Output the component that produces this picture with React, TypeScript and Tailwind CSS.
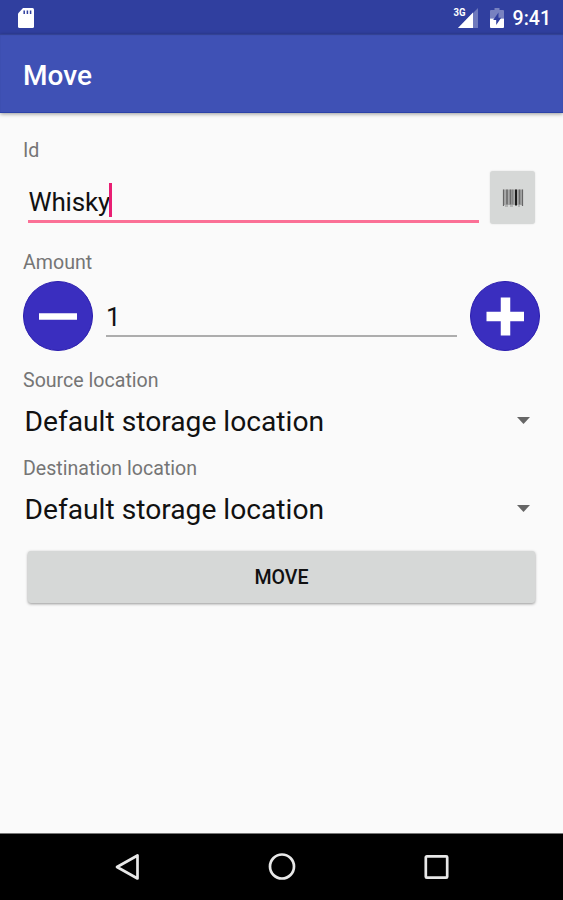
import { useState } from 'react';

function SdCardIcon() {
  return (
    <svg className="w-[18px] h-[22px]" viewBox="0 0 18 22" fill="none">
      <path d="M6 1h9.500a1.500 1.500 0 0 1 1.500 1.500v17a1.500 1.500 0 0 1-1.500 1.500h-13A1.500 1.500 0 0 1 1 19.500V6.500z" fill="#fff" />
      <path d="M7.200 3.500v3.500M10.400 3.500v3.500M13.600 3.500v3.500" stroke="#303f9f" strokeWidth="1.500" />
    </svg>
  );
}

function SignalIcon() {
  return (
    <svg className="w-[26px] h-[24px]" viewBox="0 0 26 24">
      <path d="M25 2v20H5z" fill="#fff" fillOpacity="0.3" />
      <path d="M20 6.500V22H5z" fill="#fff" />
      <text
        x="0.500"
        y="9.500"
        fill="#fff"
        stroke="#303f9f"
        strokeWidth="1"
        paintOrder="stroke"
        fontSize="11"
        fontWeight="700"
        textLength="12"
        lengthAdjust="spacingAndGlyphs"
      >
        3G
      </text>
    </svg>
  );
}

function BatteryIcon() {
  return (
    <svg className="w-[14px] h-[22px]" viewBox="0 0 14 22">
      <path d="M4.500 1h5v2H13a1 1 0 0 1 1 1v7.500H0V4a1 1 0 0 1 1-1h3.500z" fill="#fff" fillOpacity="0.35" />
      <path d="M0 11.500h14V20a1 1 0 0 1-1 1H1a1 1 0 0 1-1-1z" fill="#fff" />
      <path d="M8.500 5.500L3.200 13h3v5l5-7.300H8.500z" fill="#303f9f" />
    </svg>
  );
}

function BarcodeIcon() {
  return (
    <svg className="w-[22px] h-[18px]" viewBox="0 0 22 18">
      <rect x="1" y="0.500" width="20" height="15.500" fill="#a9aaaa" />
      <path d="M1.500 0.500V17M20.500 0.500V17" stroke="#666" strokeWidth="1.200" />
      <path d="M5 0.500V15.500M8.500 0.500V15.500M17.500 0.500V15.500" stroke="#6a6a6a" strokeWidth="1.600" />
      <path d="M10.800 0.500V15.500" stroke="#777" strokeWidth="1" />
      <path d="M14 0.500V16.500" stroke="#1c1c1c" strokeWidth="2" />
      <path d="M3 17h3M8 17h3M16 17h2" stroke="#8f9090" strokeWidth="1" />
    </svg>
  );
}

function Label({ children }: { children: string }) {
  return <div className="h-6 pt-px leading-6 text-[19.600px] text-[#757575]">{children}</div>;
}

function Spinner({ value }: { value: string }) {
  return (
    <button className="flex w-full items-center justify-between pl-[1.500px] pr-[10px] h-[58px] text-[28.200px] text-[#111]">
      <span className="pt-[2px]">{value}</span>
      <svg className="w-[13px] h-[7px] -mt-[2px]" viewBox="0 0 13 7">
        <path d="M0 0h13L6.500 7z" fill="#666" />
      </svg>
    </button>
  );
}

export default function App() {
  const [amount, setAmount] = useState(1);

  return (
    <div className="flex flex-col w-[563px] h-[900px] overflow-hidden bg-[#fafafa] font-[Roboto,sans-serif]">
      <div className="flex items-center justify-between h-[34px] pt-[2px] pl-[17px] pr-3 bg-[#303f9f]">
        <SdCardIcon />
        <div className="flex items-center">
          <SignalIcon />
          <div className="ml-[11px] flex">
            <BatteryIcon />
          </div>
          <span className="ml-[9px] pt-[2px] text-[19.500px] leading-6 font-medium text-white">9:41</span>
        </div>
      </div>

      <header className="flex items-center h-[79px] px-[23px] pt-[6px] bg-[#3f51b5] border-b border-[#2c42a8] shadow-[inset_0_1px_1px_rgba(0,0,0,0.2),0_1px_4px_rgba(0,0,0,0.4)]">
        <h1 className="text-[28px] font-medium text-white">Move</h1>
      </header>

      <main className="flex-grow px-[23px] pt-[25px]">
        <Label>Id</Label>
        <div className="flex mt-[9px] h-[53px]">
          <div className="flex items-center ml-[5px] mr-[11px] w-[451px] h-[52px] pt-[13px] border-b-[3px] border-[#fb7096]">
            <span className="pl-[0.500px] text-[26px] tracking-[-0.15px] text-[#111]">Whisky</span>
            <span className="w-[2.500px] h-[34px] -mt-[5px] -ml-px bg-[#e91e73]" />
          </div>
          <button className="flex items-center justify-center w-[45px] h-[53px] rounded-[3px] bg-[#d6d8d7] shadow-[0_0_2px_rgba(0,0,0,0.12)]">
            <BarcodeIcon />
          </button>
        </div>

        <div className="mt-[26px]">
          <Label>Amount</Label>
        </div>
        <div className="flex items-center mt-[7px] h-[70px]">
          <button onClick={() => setAmount(amount - 1)}>
            <svg className="w-[70px] h-[70px]" viewBox="0 0 70 70">
              <circle cx="35" cy="35" r="34.500" fill="#3a2ebf" stroke="#2a1cae" />
              <path d="M16 35.500h38" stroke="#fff" strokeWidth="6.500" />
            </svg>
          </button>
          <div className="flex items-center ml-[13px] mr-[13px] w-[351px] h-[42px] mt-[-1px] pt-[6px] border-b-2 border-[#adadad] text-[26px] text-[#111]">
            {amount}
          </div>
          <button onClick={() => setAmount(amount + 1)}>
            <svg className="w-[70px] h-[70px]" viewBox="0 0 70 70">
              <circle cx="35" cy="35" r="34.500" fill="#3a2ebf" stroke="#2a1cae" />
              <path d="M16.500 35.500h37.500M35.500 16.500v38" stroke="#fff" strokeWidth="9.500" />
            </svg>
          </button>
        </div>

        <div className="mt-[17px]">
          <Label>Source location</Label>
          <Spinner value="Default storage location" />
        </div>
        <div className="mt-[6px]">
          <Label>Destination location</Label>
          <Spinner value="Default storage location" />
        </div>

        <button className="flex items-center justify-center mt-[13px] ml-[5px] w-[507px] h-[52px] pt-[2px] rounded-[3px] bg-[#d6d8d7] text-[19.600px] font-medium text-[#111] shadow-[0_1px_3px_rgba(0,0,0,0.4)]">
          MOVE
        </button>
      </main>

      <nav className="flex items-center justify-center gap-[126px] h-[67px] bg-black border-t border-[#777]">
        <svg className="w-7 h-7" viewBox="0 0 28 28" fill="none" stroke="#e8e8e8" strokeWidth="2.700">
          <path d="M3 14L23.500 2.500v23z" strokeLinejoin="round" />
        </svg>
        <svg className="w-7 h-7" viewBox="0 0 28 28" fill="none" stroke="#e8e8e8" strokeWidth="2.700">
          <circle cx="14" cy="13.500" r="12" />
        </svg>
        <svg className="w-7 h-7" viewBox="0 0 28 28" fill="none" stroke="#e8e8e8" strokeWidth="2.700">
          <rect x="3.800" y="3.300" width="21.400" height="21.400" rx="1" />
        </svg>
      </nav>
    </div>
  );
}
